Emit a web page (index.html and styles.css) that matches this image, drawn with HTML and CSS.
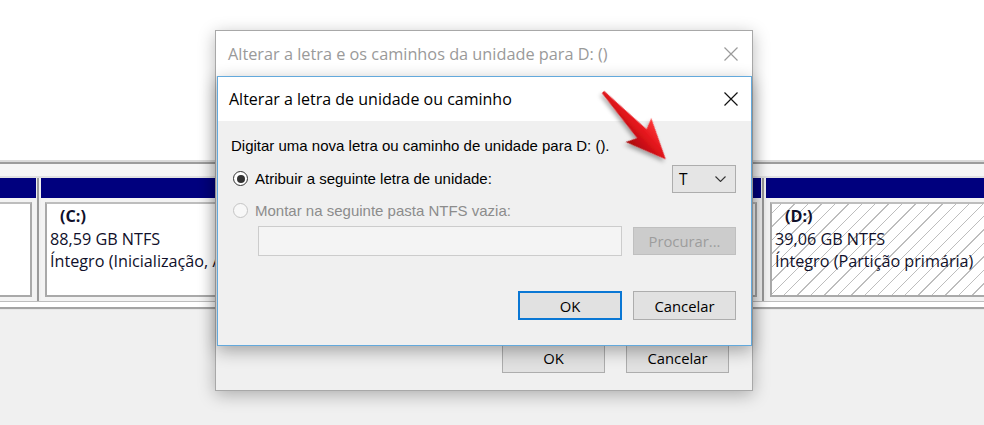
FILE: index.html
```html
<!DOCTYPE html>
<html lang="pt-BR">
<head>
<meta charset="utf-8">
<title>Alterar a letra de unidade ou caminho</title>
<link rel="stylesheet" href="styles.css">
</head>
<body>
<div class="desktop">
  <div class="top-area"></div>
  <div class="strip-top"></div>
  <div class="disk-row">
    <div class="part part-left">
      <div class="part-head"></div>
      <div class="part-body"><div class="box"></div></div>
    </div>
    <div class="sep"></div>
    <div class="part part-c">
      <div class="part-head"></div>
      <div class="part-body">
        <div class="box">
          <div class="vol">(C:)</div>
          <div class="line">88,59 GB NTFS</div>
          <div class="line">Íntegro (Inicialização, Arquivo de Paginação, Despejo de Memória)</div>
        </div>
      </div>
    </div>
    <div class="sep"></div>
    <div class="part part-d">
      <div class="part-head"></div>
      <div class="part-body">
        <div class="box hatched">
          <div class="vol">(D:)</div>
          <div class="line">39,06 GB NTFS</div>
          <div class="line">Íntegro (Partição primária)</div>
        </div>
      </div>
    </div>
  </div>
  <div class="strip-bottom"></div>
  <div class="bottom-area"></div>
</div>

<div class="window back">
  <div class="titlebar">
    <span class="title">Alterar a letra e os caminhos da unidade para D: ()</span>
    <svg class="close" viewBox="0 0 14 14" width="14" height="14"><path d="M0.5 0.5 L13.5 13.5 M13.5 0.5 L0.5 13.5" stroke="#9a9a9a" stroke-width="1.2" fill="none"/></svg>
  </div>
  <div class="back-body">
    <div class="btn-row">
      <div class="btn">OK</div>
      <div class="btn">Cancelar</div>
    </div>
  </div>
</div>

<div class="window front">
  <div class="titlebar">
    <span class="title">Alterar a letra de unidade ou caminho</span>
    <svg class="close" viewBox="0 0 14 14" width="14" height="14"><path d="M0.5 0.5 L13.5 13.5 M13.5 0.5 L0.5 13.5" stroke="#111" stroke-width="1.2" fill="none"/></svg>
  </div>
  <div class="front-body">
    <div class="intro">Digitar uma nova letra ou caminho de unidade para D: ().</div>
    <div class="row row-assign">
      <span class="radio checked"></span>
      <span class="label">Atribuir a seguinte letra de unidade:</span>
      <div class="combo">
        <span>T</span>
        <svg viewBox="0 0 11 6" width="11" height="6"><path d="M0.5 0.5 L5.5 5.5 L10.5 0.5" stroke="#333" stroke-width="1.1" fill="none"/></svg>
      </div>
    </div>
    <div class="row row-mount">
      <span class="radio disabled"></span>
      <span class="label disabled-text">Montar na seguinte pasta NTFS vazia:</span>
    </div>
    <div class="row row-path">
      <div class="path-input"></div>
      <div class="btn btn-disabled">Procurar...</div>
    </div>
    <div class="btn-row">
      <div class="btn btn-default">OK</div>
      <div class="btn">Cancelar</div>
    </div>
  </div>
</div>

<svg class="pointer" viewBox="0 0 90 90" width="90" height="90">
  <defs>
    <linearGradient id="ag" x1="0" y1="0" x2="0" y2="1">
      <stop offset="0" stop-color="#ff3b3b"/>
      <stop offset="0.45" stop-color="#e3141b"/>
      <stop offset="1" stop-color="#a5090d"/>
    </linearGradient>
    <filter id="sh" x="-30%" y="-30%" width="160%" height="160%">
      <feDropShadow dx="1" dy="3" stdDeviation="2" flood-color="#000" flood-opacity="0.35"/>
    </filter>
  </defs>
  <g transform="translate(8 7) rotate(47)" filter="url(#sh)">
    <path d="M0 -1.5 L57 -6.5 L52 -17.5 L92 0 L52 17.5 L57 6.5 L0 1.5 Z" fill="url(#ag)"/>
  </g>
</svg>
</body>
</html>
```
FILE: styles.css
```css
html, body {
  margin: 0;
  padding: 0;
}
body {
  width: 984px;
  height: 425px;
  overflow: hidden;
  position: relative;
  background: #ffffff;
  font-family: "Liberation Sans", Arial, sans-serif;
}

/* ---------- background: disk management ---------- */
.desktop {
  display: flex;
  flex-direction: column;
  height: 425px;
}
.top-area {
  height: 160px;
  background: #ffffff;
}
.strip-top {
  height: 18px;
  background: linear-gradient(#dadada 0 2px, #9c9c9c 2px 4px, #f6f6f6 4px 16px, #e2e2e2 16px 18px);
}
.disk-row {
  display: flex;
  height: 123px;
  background: #f3f3f3;
}
.part {
  display: flex;
  flex-direction: column;
}
.part-left { width: 36px; }
.part-c { flex: 1; min-width: 0; }
.part-d { width: 218px; }
.sep {
  width: 5px;
  background: linear-gradient(90deg, #f0f0f0 0 1px, #9a9a9a 1px 3px, #f0f0f0 3px);
}
.part-head {
  height: 20px;
  background: #00007e;
}
.part-body {
  flex: 1;
  padding: 4px;
  display: flex;
  min-height: 0;
}
.part-left .part-body { padding-left: 0; }
.part-d .part-body { padding-right: 0; }
.box {
  flex: 1;
  min-width: 0;
  background: #ffffff;
  border: 2px solid #a9a9a9;
  border-top-color: #bdbdbd;
  padding: 1px 0 0 3px;
  font-family: "Open Sans", "Noto Sans", sans-serif;
  font-size: 16.2px;
  line-height: 22.5px;
  color: #10102a;
  overflow: hidden;
  white-space: nowrap;
}
.part-left .box { border-left: none; }
.part-d .box { border-right: none; }
.vol {
  font-weight: bold;
  padding-left: 10px;
}
.hatched {
  background-color: #ffffff;
  background-image: repeating-linear-gradient(135deg, #ffffff 0 6px, #bdbdbd 6px 7px, #ffffff 7px 9.5px);
}
.strip-bottom {
  height: 9px;
  background: linear-gradient(#bdbdbd 0 1px, #ffffff 1px 6px, #a3a3a3 6px 8px, #e6e6e6 8px 9px);
}
.bottom-area {
  flex: 1;
  background: #f0f0f0;
}

/* ---------- windows ---------- */
.window {
  position: absolute;
  box-sizing: border-box;
  display: flex;
  flex-direction: column;
  background: #f0f0f0;
}
.back {
  left: 215px;
  top: 30px;
  width: 538px;
  height: 361px;
  border: 1px solid #a8a8a8;
  box-shadow: 0 4px 16px rgba(0, 0, 0, 0.28);
}
.front {
  left: 217px;
  top: 76px;
  width: 535px;
  height: 270px;
  border: 1px solid #63a9dc;
  box-shadow: 0 5px 16px rgba(0, 0, 0, 0.32);
}
.titlebar {
  height: 45px;
  flex: none;
  background: #ffffff;
  display: flex;
  align-items: center;
  justify-content: space-between;
  padding: 0 14px 0 12px;
  font-family: "Open Sans", "Noto Sans", sans-serif;
  font-size: 16px;
}
.front .titlebar { height: 44px; padding-right: 13px; padding-left: 11px; }
.back .title { color: #9a9a9a; font-size: 16.3px; }
.front .title { color: #000000; }
.close { display: block; }

.back-body {
  flex: 1;
  display: flex;
  flex-direction: column;
  justify-content: flex-end;
  padding: 0 23px 17px 0;
}
.back-body .btn-row { gap: 21px; }
.back-body .btn { height: 30px; }

.btn-row {
  display: flex;
  justify-content: flex-end;
  gap: 11px;
}
.btn {
  box-sizing: border-box;
  width: 103px;
  height: 29px;
  background: #e1e1e1;
  border: 1px solid #adadad;
  display: flex;
  align-items: center;
  justify-content: center;
  font-family: "Open Sans", "Noto Sans", sans-serif;
  font-size: 14.8px;
  color: #000000;
}
.btn-default {
  width: 104px;
  border: 2px solid #0a77d4;
}
.btn-disabled {
  background: #cccccc;
  border-color: #bfbfbf;
  color: #9d9d9d;
}

/* ---------- front dialog body ---------- */
.front-body {
  flex: 1;
  padding: 16px 15px 0 13px;
  font-size: 15px;
  color: #000000;
}
.intro {
  line-height: 18px;
  height: 18px;
  white-space: nowrap;
}
.row {
  display: flex;
  align-items: center;
}
.row-assign {
  margin-top: 10px;
  height: 27px;
}
.radio {
  box-sizing: border-box;
  width: 15px;
  height: 15px;
  border-radius: 50%;
  margin: 0 7px 0 2px;
  flex: none;
  display: flex;
  align-items: center;
  justify-content: center;
}
.radio.checked {
  border: 1px solid #333333;
  background: #ffffff;
}
.radio.checked::after {
  content: "";
  width: 8px;
  height: 8px;
  border-radius: 50%;
  background: #333333;
}
.radio.disabled {
  border: 1px solid #c4c4c4;
  background: #f7f7f7;
}
.label { white-space: nowrap; }
.disabled-text { color: #8c8c8c; }
.combo {
  margin-left: auto;
  box-sizing: border-box;
  width: 64px;
  height: 28px;
  border: 1px solid #adadad;
  background: #e5e5e5;
  display: flex;
  align-items: center;
  justify-content: space-between;
  padding: 0 9px 0 6px;
  font-family: "Open Sans", "Noto Sans", sans-serif;
  font-size: 15.5px;
}
.combo svg { display: block; }
.row-mount {
  margin-top: 9px;
  height: 18px;
}
.row-path {
  margin-top: 7px;
  height: 30px;
  padding-left: 27px;
  gap: 11px;
}
.path-input {
  box-sizing: border-box;
  flex: 1;
  height: 30px;
  border: 1px solid #cccccc;
  background: #f4f4f4;
}
.row-path .btn { height: 28px; }
.front-body .btn-row {
  margin-top: 35px;
}

/* ---------- annotation arrow ---------- */
.pointer {
  position: absolute;
  left: 595px;
  top: 85px;
}
```
